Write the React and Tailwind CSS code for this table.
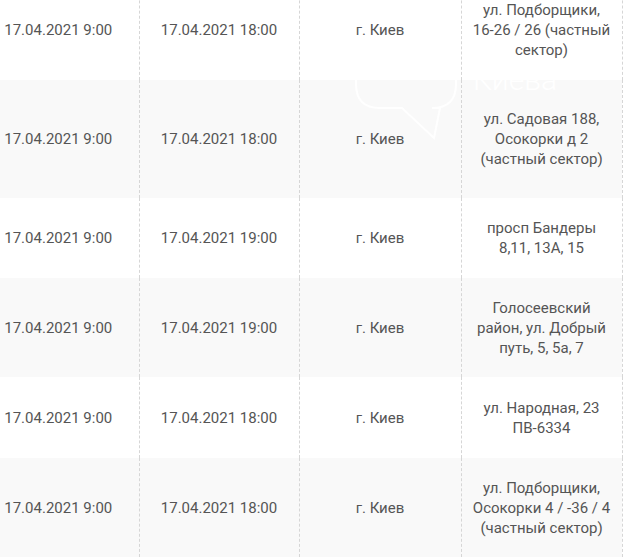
const rows = [
  { start: "17.04.2021 9:00", end: "17.04.2021 18:00", city: "г. Киев", addr: ["ул. Подборщики,", "16-26 / 26 (частный", "сектор)"], h: "h-[100px]", bg: "bg-white" },
  { start: "17.04.2021 9:00", end: "17.04.2021 18:00", city: "г. Киев", addr: ["ул. Садовая 188,", "Осокорки д 2", "(частный сектор)"], h: "h-[118px]", bg: "bg-[#f9f9f9]" },
  { start: "17.04.2021 9:00", end: "17.04.2021 19:00", city: "г. Киев", addr: ["просп Бандеры", "8,11, 13А, 15"], h: "h-[80px]", bg: "bg-white" },
  { start: "17.04.2021 9:00", end: "17.04.2021 19:00", city: "г. Киев", addr: ["Голосеевский", "район, ул. Добрый", "путь, 5, 5а, 7"], h: "h-[99px]", bg: "bg-[#f9f9f9]" },
  { start: "17.04.2021 9:00", end: "17.04.2021 18:00", city: "г. Киев", addr: ["ул. Народная, 23", "ПВ-6334"], h: "h-[81px]", bg: "bg-white" },
  { start: "17.04.2021 9:00", end: "17.04.2021 18:00", city: "г. Киев", addr: ["ул. Подборщики,", "Осокорки 4 / -36 / 4", "(частный сектор)"], h: "h-[99px]", bg: "bg-[#f9f9f9]" },
];

const cell = "border-r border-dashed border-[#d6d6d6] text-center align-middle px-2 p-0";

export default function App() {
  return (
    <div className="relative w-[625px] h-[557px] overflow-hidden bg-white font-['Roboto',sans-serif] text-[15px] leading-[20px] text-[#555]">
      <div className="-mt-[20px] -ml-[22px]">
        <table className="table-fixed border-collapse w-[644px]">
          <colgroup>
            <col className="w-[161px]" />
            <col className="w-[160px]" />
            <col className="w-[162px]" />
            <col className="w-[161px]" />
          </colgroup>
          <tbody>
            {rows.map((r, i) => (
              <tr key={i} className={`${r.h} ${r.bg}`}>
                <td className={cell}>{r.start}</td>
                <td className={cell}>{r.end}</td>
                <td className={cell}>{r.city}</td>
                <td className={cell}>
                  {r.addr.map((l, j) => (
                    <div key={j}>{l}</div>
                  ))}
                </td>
              </tr>
            ))}
          </tbody>
        </table>
      </div>

      {/* faint watermark, only visible on grey rows */}
      <div className="absolute left-[350px] top-[44px] pointer-events-none">
        <svg width="120" height="100" viewBox="0 0 120 100" fill="none">
          <path
            d="M30 2 H82 Q106 2 106 26 V40 Q106 64 82 64 H90 L84 94 L52 64 H30 Q6 64 6 40 V26 Q6 2 30 2 Z"
            stroke="#ffffff"
            strokeWidth="2"
          />
        </svg>
      </div>
      <div className="absolute left-[473px] top-[62px] pointer-events-none text-white text-[30px] leading-[36px] font-light">
        Киева
      </div>
    </div>
  );
}
